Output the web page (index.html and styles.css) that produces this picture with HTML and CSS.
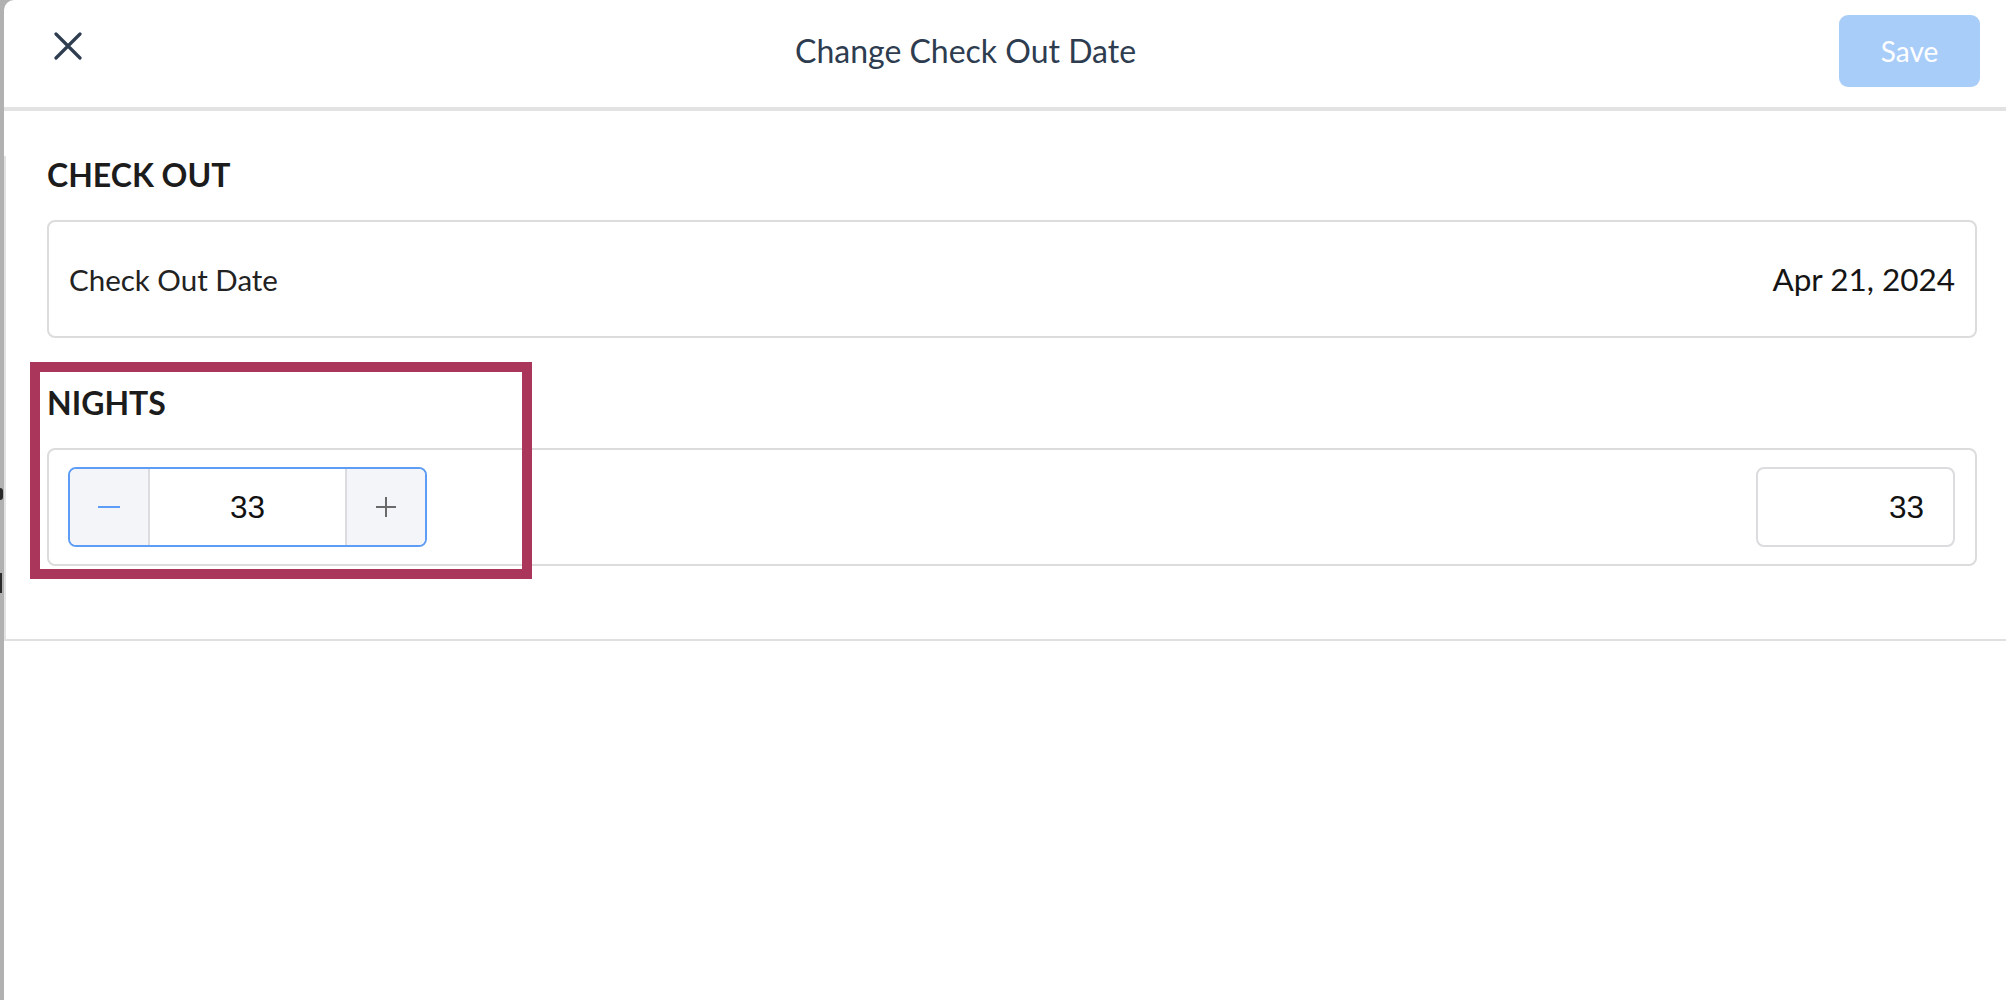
FILE: index.html
```html
<!DOCTYPE html>
<html lang="en">
<head>
<meta charset="utf-8">
<title>Change Check Out Date</title>
<link rel="stylesheet" href="styles.css">
</head>
<body>
<div class="page">
  <div class="strip">
    <span class="peek peek-a"></span>
    <span class="peek peek-b"></span>
  </div>
  <div class="main">
    <div class="modal">
      <header class="bar">
        <button class="close" aria-label="Close">
          <svg width="28" height="28" viewBox="0 0 28 28" fill="none" stroke="#2f3d50" stroke-width="3.2" stroke-linecap="round">
            <path d="M2 2 L26 26 M26 2 L2 26"/>
          </svg>
        </button>
        <h1 class="title">Change Check Out Date</h1>
        <button class="save">Save</button>
      </header>
      <div class="body">
        <section class="group">
          <h2 class="label">CHECK OUT</h2>
          <div class="card">
            <span class="field">Check Out Date</span>
            <span class="value">Apr 21, 2024</span>
          </div>
        </section>
        <section class="group">
          <h2 class="label">NIGHTS</h2>
          <div class="card">
            <div class="stepper">
              <button class="step step-minus" aria-label="Decrease">
                <svg width="22" height="22" viewBox="0 0 22 22"><path d="M0 11 H22" stroke="#5e9df5" stroke-width="2"/></svg>
              </button>
              <div class="step-value">33</div>
              <button class="step step-plus" aria-label="Increase">
                <svg width="22" height="22" viewBox="0 0 22 22"><path d="M1 11 H21 M11 1 V21" stroke="#6a6a6a" stroke-width="2"/></svg>
              </button>
            </div>
            <div class="count">33</div>
          </div>
        </section>
      </div>
    </div>
    <div class="rest"></div>
  </div>
  <div class="highlight"></div>
</div>
</body>
</html>
```
FILE: styles.css
```css
html, body {
  margin: 0;
  padding: 0;
  background: #ffffff;
}

body {
  font-family: Lato, "Open Sans", sans-serif;
  overflow: hidden;
}

.page {
  position: relative;
  display: flex;
  height: 1000px;
}

.strip {
  flex: none;
  width: 4px;
  background: #b1b1b1;
  display: flex;
  flex-direction: column;
}

.peek {
  display: block;
  background: #2a2a2a;
}

.peek-a {
  width: 3px;
  height: 12px;
  margin-top: 488px;
  border-radius: 0 6px 6px 0;
}

.peek-b {
  width: 2px;
  height: 20px;
  margin-top: 73px;
}

.main {
  flex: 1;
  display: flex;
  flex-direction: column;
  background: #b1b1b1;
}

.modal {
  background: #ffffff;
  border-top-left-radius: 10px;
}

.rest {
  flex: 1;
  background: #ffffff;
}

/* header */
.bar {
  display: flex;
  align-items: flex-start;
  height: 107px;
  border-bottom: 4px solid #e2e2e2;
}

.close {
  margin: 32px 0 0 50px;
  padding: 0;
  border: 0;
  background: none;
  width: 28px;
  height: 28px;
  display: flex;
}

.title {
  margin: 32px 0 0 713px;
  font-size: 32px;
  line-height: 38px;
  font-weight: 400;
  color: #2e3c4f;
  white-space: nowrap;
}

.save {
  margin: 15px 26px 0 auto;
  width: 141px;
  height: 72px;
  border: 0;
  border-radius: 9px;
  background: #a9cdf9;
  color: #ffffff;
  font-family: Lato, "Open Sans", sans-serif;
  font-size: 28px;
  padding: 0;
}

/* body */
.body {
  border-left: 2px solid #e2e2e2;
  border-bottom: 2px solid #e0e0e0;
  padding: 0 29px 73px 41px;
}

.label {
  margin: 45px 0 27px 0;
  font-size: 32px;
  line-height: 37px;
  font-weight: 700;
  color: #1c1c1c;
}

.group + .group .label {
  margin-top: 46px;
}

.card {
  box-sizing: border-box;
  height: 118px;
  border: 2px solid #dcdcdc;
  border-radius: 8px;
  padding: 0 20px 0 19px;
  display: flex;
  align-items: center;
  justify-content: space-between;
}

.field {
  font-size: 29.5px;
  color: #222222;
  padding-left: 1px;
}

.value {
  font-size: 31.5px;
  color: #151515;
}

/* stepper */
.stepper {
  box-sizing: border-box;
  width: 359px;
  height: 80px;
  border: 2px solid #5e9df5;
  border-radius: 8px;
  overflow: hidden;
  display: flex;
}

.step {
  flex: none;
  border: 0;
  padding: 0;
  background: #f4f5f9;
  display: flex;
  align-items: center;
  justify-content: center;
}

.step-minus {
  border-right: 2px solid #dcdce0;
  width: 80px;
}

.step-plus {
  border-left: 2px solid #dcdce0;
  width: 80px;
}

.step-value {
  flex: 1;
  display: flex;
  align-items: center;
  justify-content: center;
  font-family: "Liberation Sans", Arial, sans-serif;
  font-size: 31.5px;
  color: #111111;
}

.count {
  box-sizing: border-box;
  width: 199px;
  height: 80px;
  border: 2px solid #dcdce0;
  border-radius: 8px;
  display: flex;
  align-items: center;
  justify-content: flex-end;
  padding-right: 29px;
  font-family: "Liberation Sans", Arial, sans-serif;
  font-size: 31.5px;
  color: #111111;
}

/* annotation overlay */
.highlight {
  position: absolute;
  left: 30px;
  top: 362px;
  width: 502px;
  height: 217px;
  box-sizing: border-box;
  border: 10px solid #aa375b;
  pointer-events: none;
}
```
